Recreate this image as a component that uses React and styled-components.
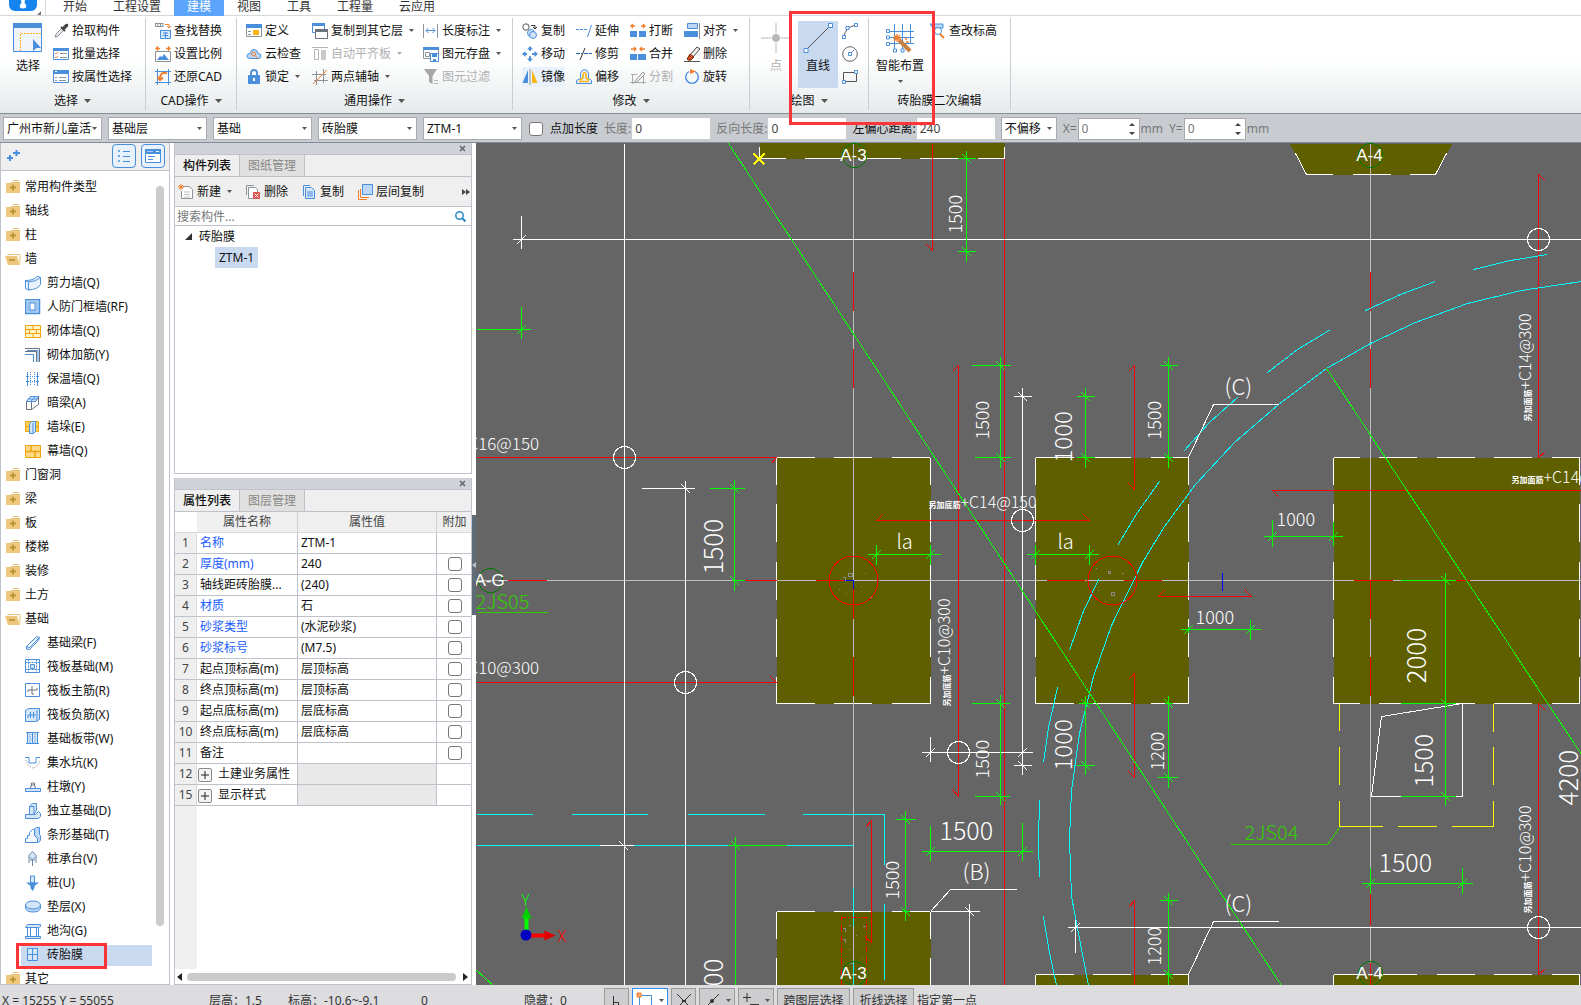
import { useState } from "react";
import styled, { createGlobalStyle, css } from "styled-components";

const B = "#4a8fdc";
const L = "#d6e6f9";
const O = "#f07f2e";
const Y = "#fdb515";
const G = "#8b9299";

const GlobalStyle = createGlobalStyle`
  * {
    box-sizing: border-box;
  }

  body {
    margin: 0;
    background: #fff;
    color: #111;
    font-family: "Noto Sans", "Noto Sans CJK SC", sans-serif;
    font-size: 12px;
    line-height: 16px;
  }

  button,
  input,
  select {
    font: inherit;
    color: inherit;
    padding: 0;
    border: 0;
    background: none;
  }
`;

/* ---------- icons ---------- */

const icons = {
  picker: <><path d="M2 14l1-3 6-6 2 2-6 6z" fill="#e6eaee" stroke={G} /><path d="M8 4l4 4M10 5l3-3q2-1 1 1l-3 3z" stroke="#444" strokeWidth="2" /></>,
  batch: <><path d="M.5 2.500h15v11H.5z" fill="#fff" stroke={B} /><path d="M0 2h16v3H0z" fill={B} stroke="none" /><path d="M2 7l1 1 2-2M2 11l1 1 2-2" stroke={O} /><path d="M7 7.500h7M7 11.500h7" stroke={G} /></>,
  byProp: <><path d="M.5 1.500h15v12H.5z" fill="#fff" stroke={B} /><path d="M0 1h16v4H0z" fill={B} stroke="none" /><path d="M2 2.500h2" stroke="#fff" /><path d="M2 8.500h2M2 11.500h2M6 8.500h7M6 11.500h7" stroke={G} /></>,
  find: <><path d="M0 .5h8M0 3.500h8M.5 0v4M3 0v4M5.500 0v4M8 0v4" stroke={G} /><path d="M10 1.500h4v3M12 3l2 2 2-2" stroke={O} /><path d="M5.500 7.500h10v8h-10z" fill={L} stroke={B} /><path d="M5 7.500h11M8 10h5M8 12.500h5M10.500 9v6" stroke={B} /></>,
  scale: <><path d="M1 2.500h4M3 .5l-2 2 2 2M15 2.500h-4M13 .5l2 2-2 2" stroke={O} strokeWidth="1.300" /><path d="M.5 5.500h15v10H.5z" fill="#fff" stroke={G} /><path d="M2 14l3-4 2 1 2-3 5 6z" fill={B} stroke="none" /></>,
  restore: <><path d="M2.500 0v16M13.500 0v16M0 2.500h16M0 13.500h16" stroke={B} /><path d="M12 4H8q-3 1-3 6M2.500 8L5 11l3-2.500" stroke={O} strokeWidth="2" /></>,
  define: <><path d="M.5 1.500h15v12H.5z" fill="#fff" stroke={G} /><path d="M0 1h16v4H0z" fill={B} stroke="none" /><path d="M2 8.500h3M2 11.500h3" stroke={G} /><path d="M7 7h6v5H7z" fill={Y} stroke="none" /></>,
  cloud: <><path d="M4 12.500q-3.500 0-3-3 .5-2 3-2 .5-4 4-4t4 4q3 0 3 2.500t-3 2.500z" fill="#bcd8f6" stroke={B} /><circle cx="7.500" cy="8" r="2" stroke={O} /><path d="M9 9.500l3 3" stroke={O} /></>,
  lock: <><path d="M5 7V4q0-3 3-3t3 3v3" stroke={B} strokeWidth="1.800" /><path d="M2.500 6.500h11v8h-11z" fill={B} stroke={B} /><path d="M8 9v3" stroke="#fff" strokeWidth="2" /></>,
  floors: <><path d="M.5.5h12v9H.5z" fill="#fff" stroke={B} /><path d="M0 0h13v3H0z" fill={B} stroke="none" /><path d="M3.500 6.500h12v9h-12z" fill="#fff" stroke="#6b747d" /><path d="M3 6h13v3H3z" fill="#6b747d" stroke="none" /></>,
  flush: <><path d="M0 1.500h16" stroke="#b5b5b5" /><path d="M2.500 3.500h4v10h-4z" stroke="#b5b5b5" /><path d="M9 4h5v10H9z" fill="#c9c9c9" stroke="none" /></>,
  axis2: <><path d="M4.500 2v14M11.500 0v14M0 5.500h14M2 11.500h14" stroke={G} /><path d="M1 15L15 1" stroke={O} /></>,
  measure: <><path d="M.5 1v14M14.500 1v14" stroke={G} /><path d="M3 7.500h9M5.500 5L3 7.500 5.500 10M9.500 5L12 7.500 9.500 10" stroke={B} /></>,
  saveEl: <><path d="M.5 1.500h15v11H.5z" fill="#fff" stroke={G} /><path d="M0 1h16v3H0z" fill={B} stroke="none" /><path d="M2.500 6.500h4v4h-4z" stroke={G} /><path d="M7.500 7.500h8v8h-8z" fill="#fff" stroke={B} /><path d="M9 8h5v3H9zM10 13h3v2h-3z" fill={B} stroke="none" /></>,
  filter: <><path d="M1 0h13L9.500 7v8L6 13V7z" fill="#a6a6a6" stroke="none" /><path d="M11 11.500h4M11 14.500h4" stroke="#b9b9b9" /></>,
  copy: <><circle cx="4" cy="4" r="3.200" stroke="#555" /><circle cx="9" cy="10" r="3.500" fill="#cfe2f8" stroke={B} /><circle cx="11" cy="12" r="3.500" fill="#cfe2f8" stroke={B} /><path d="M9 2.500h4v3M11 4l2 2 2-2" stroke="#333" /></>,
  move: <><path d="M8 2v4M8 10v4M2 8h4M10 8h4" stroke={B} strokeWidth="1.800" strokeDasharray="3 1" /><path d="M8 0l3 3.500H5zM8 16l3-3.500H5zM0 8l3.500-3v6zM16 8l-3.500-3v6z" fill={B} stroke="none" /></>,
  mirror: <><path d="M6 1v13H.5z" fill={B} stroke="none" /><path d="M10 1v13h5.500z" fill={Y} stroke="none" /><path d="M8 0v16" stroke={G} /></>,
  extend: <><path d="M0 6.500h11" stroke={B} strokeDasharray="3 1" /><path d="M15.500 2l-4 12" stroke={B} /></>,
  trim: <><path d="M0 7.500h6M8 7.500h8" stroke="#235fa8" strokeDasharray="4 1" /><path d="M9 2L4 14" stroke="#333" /></>,
  offset: <><path d="M.5 14.500v-3l4-2v-5q1-4 4-4t4 4v5l3 2v3z" fill="#e7f1fd" stroke={B} /><path d="M3 12.500h10M4 11l3-2V5q1.500-3 3 0v4l3 2" stroke={Y} strokeWidth="1.600" /></>,
  breakUp: <><path d="M0 8h7v6H0zM9 8h7v6H9z" fill={B} stroke="none" /><path d="M1 3h4M3 1L1 3l2 2M15 3h-4M13 1l2 2-2 2" stroke={O} strokeWidth="1.300" /></>,
  merge: <><path d="M0 8h7v6H0zM8 8h8v6H8z" fill={B} stroke="none" /><path d="M1 3h5M4 1l2 2-2 2M15 3h-5M12 1l-2 2 2 2" stroke={O} strokeWidth="1.300" /></>,
  split: <><path d="M2.500 5v10M13.500 7v8M0 13.500h16M1 5.500h6" stroke="#aaa" /><path d="M5 12l8-9 2 2-8 8-3 1z" fill="#eee" stroke="#999" /></>,
  align: <><path d="M3.500.5h10v5h-10z" fill="#bcd8f6" stroke={B} /><path d="M0 8h14v6H0z" fill={B} stroke="none" /><path d="M15.500 0v16" stroke={G} /></>,
  erase: <><path d="M0 15.500h16" stroke="#555" /><path d="M6 9l7-8 3 2-7 8z" fill="#eee" stroke="#444" /><path d="M6 8l4 3-3 3q-3 1-4-1z" fill="#c8501e" stroke="#7a2b0c" /></>,
  rotate: <><path d="M11 2.500A6.300 6.300 0 1 1 5 2.500" stroke={B} strokeWidth="1.400" /><path d="M6 0l6 2.500L6 5z" fill={O} stroke="none" /></>,
  arc: <><path d="M2 14q1-10 12-12" stroke="#555" /><path d="M.5 12.500h3v3h-3zM12.500.5h3v3h-3zM4 3.500h3v3H4z" fill="#fff" stroke={B} /></>,
  circle: <><circle cx="8" cy="8" r="7.300" stroke="#666" /><path d="M8 8l4-4" stroke={B} /><path d="M6.500 6.500h3v3h-3z" fill="#fff" stroke={B} /></>,
  rect: <><path d="M1.500 3.500h13v9h-13z" stroke="#555" /><path d="M.5 11.500h3v3h-3zM12.500 1.500h3v3h-3z" fill="#fff" stroke={B} /></>,
  checkElev: <><path d="M0 1h13v4H3z" fill="#bcd8f6" stroke={B} /><circle cx="8" cy="8" r="3.500" fill="#fff" stroke={B} /><path d="M10 11l4 4" stroke={O} strokeWidth="2" /></>,
  newDoc: <><path d="M5 2.500h6l3.500 3v9H3.500V7" fill="#fff" stroke={G} /><path d="M6 8h6M6 10.500h6M6 13h6" stroke="#bbb" /><path d="M0 3h6M3 0v6M1 1l4 4M5 1L1 5" stroke={O} /></>,
  del: <><path d="M1.500 11V1.500H9" stroke={G} /><path d="M3.500 3.500h7l2 2v9h-9z" fill="#fff" stroke={G} /><path d="M8 8h7v7H8z" fill="#d9534f" stroke="none" /><path d="M9.500 9.500l4 4M13.500 9.500l-4 4" stroke="#fff" /></>,
  copyDoc: <><path d="M2.500 12V1.500H9" stroke={B} /><path d="M4.500 3.500h6l3 3v8h-9z" fill={L} stroke={B} /><path d="M6 8h6M6 10h6M6 12h6" stroke={B} /></>,
  layerCopy: <><path d="M1.500 6v9.500H10M3.500 5v8.500H12" stroke={O} /><path d="M5.500.5h10v10h-10z" fill="#bcd8f6" stroke={B} /></>,
  folder: <><path d="M1 4h4l1-1h9v11H1z" fill="#ecc77c" stroke="none" /><path d="M8 1.500h6" stroke="#ecc77c" /><path d="M5 8.500h6M8 5.500v6" stroke="#b98a2e" strokeWidth="1.500" /></>,
  folderOpen: <><path d="M3 13V3.500h12v9" fill="#fff" stroke="#ecc77c" /><path d="M0 5h12l3 9H3z" fill="#ecc77c" stroke="none" /><path d="M4 9h6" stroke="#b98a2e" strokeWidth="1.500" /></>,
  shear: <><path d="M.5 5.500q9 0 12-4.500l3 1.500v7q-3 5-12 5.500l-3-1.500z" fill="#eaf3fd" stroke={B} /><path d="M.5 5.500l3 1.500q8-.5 12-4.500M3.500 7v8" stroke={B} /></>,
  frame: <><path d="M.5.5h14v14H.5z" fill="#bcd8f6" stroke={B} strokeWidth="1.500" /><path d="M3 3h9v9H3z" stroke="#7fb2ea" /><path d="M5 4h5v7H5z" fill="#fff" stroke={B} /></>,
  brick: <><path d="M.5 2.500h15v12H.5z" fill="#fff1c8" stroke="#efa50a" /><path d="M0 6.500h16M0 10.500h16M8 2v4M4.500 6v4M11.500 6v4M8 10v4" stroke="#efa50a" /></>,
  rebar: <><path d="M0 1.500h14.500V15M0 4.500h11.500V15" stroke="#6b747d" /><path d="M2 3.500h11V15M0 7.500h8.500V15" stroke={B} /></>,
  warm: <><path d="M2.500 1v14M12.500 1v14" stroke={B} /><path d="M5.500 1v14M9.500 1v14M1 5.500h13M1 10.500h13" stroke={B} strokeDasharray="1 1" /></>,
  hidden: <><path d="M1.500 6.500l4-5h8l-3 5zM1.500 6.500h5v8h-5zM6.500 14.500l7-5v-8" fill="#fff" stroke="#6b747d" /><path d="M1.500 6.500l4-5h8l-3 5z" fill={L} stroke={B} /><path d="M4 4h8M6 6l4-4" stroke={B} /></>,
  pier: <><path d="M.5 2.500h13v10H.5z" fill="#fdd25a" stroke="#efa50a" /><path d="M0 7.500h14" stroke="#efa50a" /><path d="M4.500 4.500l2-2h4v10l-2 2h-4z" fill={L} stroke={B} /><path d="M8 4v10" stroke={B} /></>,
  curtain: <><path d="M.5 2.500h15v12H.5z" fill="#fdd98a" stroke="#efa50a" /><path d="M0 8.500h16M6 2v6M10 8v6" stroke="#efa50a" strokeWidth="1.500" /></>,
  beam: <path d="M1.500 11.500l10-10 3 1-1 3-9 9-3-.5zM1.500 11.500l3 1 10-10" fill={L} stroke={B} />,
  raft: <><path d="M.5.5h14v13H.5z" stroke={B} /><path d="M3.500.5v13M11.500.5v13M.5 3.500h14M.5 10.500h14" stroke={B} strokeDasharray="2 1" /><path d="M5.500 5.500h4v4h-4z" fill={L} stroke={B} /></>,
  raftMain: <><path d="M.5.5h14v13H.5z" fill="#fff" stroke={B} /><path d="M3 9V7h9V5M7 3v8h2" stroke="#6b747d" /></>,
  raftNeg: <><path d="M.5 3.500l3-2h11v11l-3 2H.5z" fill={L} stroke={B} /><path d="M12 3v11M3 11V8h8M5.500 5v6M8.500 5v6" stroke={B} /></>,
  strip: <><path d="M1 1.500h13M1 12.500h13" stroke={B} /><path d="M3 2h9v10H3z" fill={L} stroke="none" /><path d="M2.500 2v10M7.500 2v10M12.500 2v10" stroke={B} /><path d="M5 3v9M10 3v9" stroke={B} strokeDasharray="1 1" /></>,
  sump: <><path d="M0 2.500h4V8h7V2.500h4" stroke={B} /><path d="M1 5q2 7 7 8 5-1 7-8" stroke={G} strokeDasharray="1 1" /></>,
  pedestal: <><path d="M.5 9.500h15v3H.5z" fill={L} stroke={B} /><path d="M5.500 9l1-3h3l1 3M6.500 6V4h3v2" stroke="#6b747d" /></>,
  isolated: <><path d="M.5 11.500h10l3-3 2 2v3l-2 2H.5zM4.500 11V3l3-2.500h4v7L9 11M4.500 3.500H9V11" fill={L} stroke={B} /></>,
  stripFd: <><path d="M9 2.500l2.500-2h3v7l1 1v5l-2 2h-3z" fill="#bcd8f6" stroke={B} /><path d="M.5 15.500v-4h2V8.500h2v-3l3-3h2v6l3 3v4z" fill="#f3f8fe" stroke={B} /></>,
  cap: <><path d="M7.500.5l4 4.500-4 4-4-4z" fill={L} stroke="#6b88a8" /><path d="M7.500 9v6M4 6v6M11 6v6M5 9h5" stroke="#6b88a8" /></>,
  pile: <><path d="M5.500 1h4v7h-4z" fill={L} stroke={B} /><path d="M1 7.500h13L9.500 11v2l-2 3-2-3v-2z" fill={B} stroke="none" /></>,
  cushion: <><path d="M.5 6v3q1 4 7.500 4t7.500-4V6" fill="#bcd8f6" stroke={B} /><ellipse cx="8" cy="6" rx="7.500" ry="4" fill={L} stroke={B} /></>,
  trench: <><path d="M.5 4.500l2-3h13v2l-2 1zM2.500 5v8M5.500 5v8M11.500 5v8M13.500 5v8M.5 13.500h15v2H.5z" fill={L} stroke={B} /></>,
  mould: <><path d="M2.500 1.500h10v12h-10z" fill={L} stroke={B} /><path d="M7.500 2v11M3 7.500h9" stroke={B} /></>,
};

const IconSvg = styled.svg`
  flex: none;
  width: 16px;
  height: 16px;
`;

const Icon = ({ name }) => (
  <IconSvg viewBox="0 0 16 16" fill="none" aria-hidden="true">{icons[name]}</IconSvg>
);

const ArrowSvg = styled.svg`
  flex: none;
  width: ${(p) => (p.$small ? 5 : 7)}px;
  height: ${(p) => (p.$small ? 3 : 4)}px;
  pointer-events: none;
  color: ${(p) => (p.$muted ? "#b0b0b0" : "#555")};
`;

const Arrow = ({ muted, small }) => (
  <ArrowSvg $muted={muted} $small={small} viewBox="0 0 7 4" aria-hidden="true"><path d="M0 0h7L3.500 4z" fill="currentColor" /></ArrowSvg>
);

/* ---------- shell ---------- */

const Page = styled.div`
  position: relative;
  display: flex;
  flex-direction: column;
  height: 100vh;
  overflow: hidden;
`;

const TabBar = styled.nav`
  flex: none;
  display: flex;
  height: 16px;
  border-bottom: 1px solid #d5d9da;
`;

const Logo = styled.svg`
  width: 46px;
  height: 16px;
`;

const MenuTab = styled.button`
  height: 16px;
  padding: 0 13px 2px;
  line-height: 14px;
  color: ${(p) => (p.$active ? "#fff" : "#333")};
  background: ${(p) => (p.$active ? "#5aa5fb" : "none")};

  &:first-of-type {
    margin-left: 4px;
  }
`;

const Ribbon = styled.div`
  flex: none;
  display: flex;
  height: 98px;
  padding: 2px 0 3px;
  background: linear-gradient(#fff 45%, #e5eaeb);
  border-bottom: 1px solid #858f96;
`;

const Group = styled.section`
  display: flex;
  flex-direction: column;
  width: ${(p) => p.$width}px;
  border-right: 1px solid #c9cdcf;
`;

const GroupBody = styled.div`
  display: flex;
  height: 70px;
  padding-top: 1px;
  padding-left: ${(p) => p.$pad}px;
`;

const GroupLabel = styled.div`
  display: flex;
  align-items: center;
  justify-content: center;
  gap: 6px;
  height: 22px;
  padding-top: 3px;
`;

const Column = styled.div`
  flex: none;
  display: grid;
  grid-template-rows: repeat(3, 23px);
  justify-items: start;
  align-items: center;
  min-width: ${(p) => p.$width || 0}px;
  padding-left: ${(p) => p.$pad || 0}px;
`;

const ToolButton = styled.button`
  display: flex;
  align-items: center;
  gap: 3px;
  height: 20px;
  white-space: nowrap;
  color: ${(p) => (p.$off ? "#b0b0b0" : "#111")};
  ${(p) =>
    p.$hover &&
    css`
      background: #e9f2fc;
    `}

  ${ArrowSvg} {
    margin-left: 3px;
  }
`;

const BigButton = styled.button`
  flex: none;
  display: flex;
  flex-direction: column;
  align-items: center;
  width: ${(p) => p.$width || 40}px;
  height: 67px;
  margin: 2px 2px 0 0;
  padding-top: 2px;
  color: ${(p) => (p.$off ? "#b0b0b0" : "#111")};
  background: ${(p) => (p.$active ? "#c9d9f0" : "none")};

  svg:first-child {
    width: 30px;
    height: 30px;
    margin-bottom: 5px;
  }

  ${ArrowSvg} {
    margin-top: 6px;
  }
`;

const HighlightFrame = styled.div`
  position: absolute;
  left: 789px;
  top: 11px;
  width: 146px;
  height: 114px;
  border: 3px solid #fd3538;
  pointer-events: none;
`;

const OptionsBar = styled.div`
  flex: none;
  display: flex;
  align-items: center;
  gap: 6px;
  height: 29px;
  padding: 1px 3px 0;
  background: #c8ccd1;
  border-bottom: 1px solid #858b98;
  color: #777;
`;

const SelectBox = styled.div`
  flex: none;
  display: flex;
  align-items: center;
  width: ${(p) => p.$width || 99}px;
  height: 23px;
  padding: 0 4px 0 3px;
  background: #fff;
  border: 1px solid #a9adb3;
  color: #111;

  select {
    appearance: none;
    flex: 1;
    min-width: 0;
    outline: none;
  }
`;

const Field = styled.label`
  flex: none;
  display: flex;
  align-items: center;
  gap: 1px;
  color: ${(p) => (p.$strong ? "#111" : "#777")};

  > input {
    width: 78px;
    height: 21px;
    padding-left: 3px;
    background: #fff;
    color: #444;
  }
`;

const CheckField = styled(Field)`
  gap: 7px;
  padding-left: 1px;
`;

const Tick = styled.input.attrs({ type: "checkbox" })`
  && {
    appearance: none;
    display: block;
    flex: none;
    width: 14px;
    height: 14px;
    margin: 0 auto;
    padding: 0;
    background: #fff;
    border: 1px solid #777;
    border-radius: 3px;
  }
`;

const Spin = styled.span`
  display: flex;
  align-items: center;
  width: 62px;
  height: 22px;
  padding: 0 4px 0 3px;
  background: #fff;
  border: 1px solid #aaa;

  input {
    flex: 1;
    min-width: 0;
  }

  svg {
    width: 6px;
    height: 12px;
  }
`;

const Main = styled.main`
  flex: 1;
  display: flex;
  min-height: 0;
`;

/* ---------- component tree on the left ---------- */

const SidePanel = styled.aside`
  flex: none;
  display: flex;
  flex-direction: column;
  width: 170px;
  border: 1px solid #bfc2ca;
  border-top: 0;
`;

const SideHead = styled.div`
  flex: none;
  display: flex;
  align-items: center;
  gap: 5px;
  height: 28px;
  padding: 0 4px 2px 6px;
  background: #efefef;
  border-bottom: 1px solid #bfc2ca;

  > svg {
    width: 13px;
    height: 13px;
    margin-right: auto;
  }
`;

const ViewToggle = styled.button`
  display: grid;
  place-items: center;
  width: 24px;
  height: 24px;
  background: #e8f2fd;
  border: 1px solid ${B};
  border-radius: 4px;
`;

const SideBody = styled.div`
  flex: 1;
  display: flex;
  min-height: 0;
  overflow: hidden;
`;

const Tree = styled.ul`
  flex: 1;
  margin: 0;
  padding: 4px 0 0;
  list-style: none;
`;

const TreeRow = styled.li`
  position: relative;
  display: flex;
  align-items: center;
  height: 24px;
  padding-left: ${(p) => (p.$child ? 20 : 4)}px;
`;

const TreeButton = styled.button`
  display: flex;
  align-items: center;
  gap: ${(p) => (p.$child ? 6 : 4)}px;
  width: 131px;
  height: 21px;
  padding-left: ${(p) => (p.$child ? 4 : 0)}px;
  white-space: nowrap;
  background: ${(p) => (p.$active ? "#c9d9f0" : "none")};
`;

const RowFrame = styled.span`
  position: absolute;
  left: 15px;
  top: 0;
  width: 91px;
  height: 26px;
  border: 3px solid #fd3538;
  pointer-events: none;
`;

const ScrollThumb = styled.div`
  flex: none;
  width: 8px;
  height: 740px;
  margin: 15px 5px 0 0;
  border-radius: 4px;
  background: #cacaca;
`;

/* ---------- middle docks ---------- */

const Docks = styled.div`
  flex: none;
  display: flex;
  flex-direction: column;
  gap: 4px;
  width: 298px;
  margin-left: 4px;
`;

const Dock = styled.section`
  flex: ${(p) => (p.$height ? `0 0 ${p.$height}px` : 1)};
  display: flex;
  flex-direction: column;
  min-height: 0;
  border: 1px solid #bfc2ca;
  border-top: 0;
`;

const DockTitle = styled.div`
  flex: none;
  display: flex;
  justify-content: flex-end;
  height: 12px;
  padding-right: 5px;
  background: #d0d3d9;
  border-bottom: 1px solid #bfc2ca;

  button {
    display: grid;
    place-items: center;
    width: 7px;
  }
`;

const DockTabs = styled.div`
  flex: none;
  display: flex;
  height: 22px;
  background: #efefef;
  border-bottom: 1px solid #bfc2ca;
`;

const DockTab = styled.button`
  width: 65px;
  border-right: 1px solid #bfc2ca;
  font-weight: ${(p) => (p.$active ? 500 : 400)};
  color: ${(p) => (p.$active ? "#111" : "#888")};
  background: ${(p) => (p.$active ? "#efefef" : "#e0e0e0")};
`;

const DockTools = styled.div`
  flex: none;
  display: flex;
  align-items: center;
  gap: 13px;
  height: 30px;
  padding: 0 1px 0 3px;
  background: #efefef;
  border-bottom: 1px solid #bfc2ca;
`;

const MoreButton = styled.button`
  display: grid;
  margin-left: auto;
`;

const SearchRow = styled.label`
  flex: none;
  display: flex;
  align-items: center;
  height: 19px;
  padding: 1px 5px 0 2px;
  border-bottom: 1px solid #bfc2ca;

  input {
    flex: 1;
    min-width: 0;
    outline: none;
  }

  input::placeholder {
    color: #777;
    opacity: 1;
  }
`;

const PartTree = styled.div`
  display: flex;
  flex-direction: column;
  align-items: flex-start;
  padding-left: 10px;
`;

const PartRow = styled.button`
  display: flex;
  align-items: center;
  gap: 7px;
  height: 21px;
  margin-left: ${(p) => (p.$leaf ? 30 : 0)}px;
  padding: 0 ${(p) => (p.$leaf ? 4 : 0)}px;
  background: ${(p) => (p.$leaf ? "#c9d9f0" : "none")};
`;

const GridArea = styled.div`
  flex: 1;
  min-height: 0;
  background: linear-gradient(90deg, #efefef 22px, #fff 22px);
`;

const PropTable = styled.table`
  width: 100%;
  table-layout: fixed;
  border-spacing: 0;

  th {
    height: 21px;
    padding: 0;
    font-weight: 400;
    color: #444;
    background: #efefef;
    border-right: 1px solid #cfd1d6;
    border-bottom: 1px solid #d8d8d8;
  }

  th:first-child {
    background: #fff;
    border-right: 0;
  }

  td {
    height: 21px;
    padding: 0 0 0 3px;
    white-space: nowrap;
    background: #fff;
    border-right: 1px solid #bfc2ca;
    border-bottom: 1px solid #bfc2ca;
  }

  td:first-child {
    padding: 0;
    text-align: center;
    color: #444;
    background: #efefef;
    border-right-color: #dcdcdc;
  }

  th:last-child,
  td:last-child {
    padding: 0 0 0 1px;
    border-right: 0;
  }
`;

const NameCell = styled.td`
  color: ${(p) => (p.$link ? "#1a5cff" : "#111")};
`;

const ValueCell = styled.td`
  && {
    background: ${(p) => (p.$empty ? "#e9e9e9" : "#fff")};
  }
`;

const Expander = styled.button`
  display: inline-grid;
  place-items: center;
  width: 14px;
  height: 14px;
  margin: 0 6px 0 -2px;
  vertical-align: middle;
  background: #f4f4f4;
  border: 1px solid #888;
  border-radius: 2px;
`;

const HScroll = styled.div`
  flex: none;
  display: flex;
  align-items: center;
  gap: 5px;
  height: 15px;
  padding: 0 3px 0 2px;

  svg {
    width: 5px;
    height: 8px;
  }

  div {
    flex: 1;
    height: 8px;
    margin-right: 2px;
    border-radius: 4px;
    background: #cacaca;
  }
`;

const Splitter = styled.div`
  flex: none;
  display: grid;
  place-items: center;
  width: 4px;
  height: 100px;
  margin-top: 372px;
  background: #5f6b77;
`;

/* ---------- drawing ---------- */

const Drawing = styled.svg`
  flex: 1;
  min-width: 0;
  height: 100%;
  background: #656565;
  fill: none;
  shape-rendering: crispEdges;

  text {
    font-family: "Noto Sans CJK SC", sans-serif;
    font-weight: 300;
    fill: #fff;
    stroke: none;
  }
`;

const edge = { stroke: "#fff", strokeDasharray: "38 19.500" };

const Block = ({ x, y, w, h, offset = 0 }) => (
  <g>
    <rect x={x} y={y} width={w} height={h} fill="#5f5f00" />
    <path d={`M${x} ${y}h${w}M${x} ${y + h}h${w}`} {...edge} strokeDashoffset={offset} />
    <path d={`M${x} ${y}v${h}M${x + w} ${y}v${h}`} {...edge} strokeDashoffset={11} />
  </g>
);

const Label = ({ x, y, size = 18, up, color, prefix, children }) => (
  <text x={x} y={y} fontSize={size} transform={up ? `rotate(-90 ${x} ${y})` : undefined} style={color ? { fill: color } : undefined}>
    {prefix && <tspan fontSize="8" fontWeight="700">{prefix}</tspan>}
    {children}
  </text>
);

const AxisMark = ({ x, y, children }) => (
  <g>
    <circle cx={x} cy={y} r="12" stroke="#007a00" />
    <text x={x - 1} y={y + 5} fontSize="17" textAnchor="middle" style={{ fontFamily: "Liberation Sans", fontWeight: 400 }}>{children}</text>
  </g>
);

// tick marks: v = on a vertical dimension line, h = on a horizontal one
const v = (x, y, a = 9, b = a) => `M${x - a} ${y}H${x + b}M${x - 4} ${y - 4}l9 9`;
const h = (x, y, a = 10, b = a) => `M${x} ${y - a}V${y + b}M${x - 5} ${y + 5}l9 -9`;

const greenPath = [
  "M728 143L1281 985M1326 368L1581 754M476 970L493 985",
  "M476 329H530", h(521, 329, 23, 9),
  "M966 150V261", v(966, 158), v(966, 251),
  "M1000 356V467", v(1000, 365, 29, 10), v(1000, 457, 26, 10),
  "M734 479V590", v(734, 488, 25, 10), v(734, 580, 3, 10),
  "M867 554H940", h(876, 554), h(930, 554),
  "M1026 554H1098", h(1035, 554), h(1089, 554),
  "M1085 387V467", v(1085, 396), v(1085, 457),
  "M1168 356V467", v(1168, 365), v(1168, 457, 4),
  "M1263 536H1342", h(1272, 536, 17, 10), h(1333, 536, 15, 9),
  "M1180 629H1260", h(1188, 629, 3), h(1250, 629),
  "M1445 572V805", v(1445, 580, 45, 10), v(1445, 703, 45, 10), v(1445, 796, 45, 10),
  "M1361 883H1472", h(1370, 883, 16, 10), h(1462, 883, 16, 10),
  "M1168 695V787", v(1168, 703, 4), v(1168, 777, 11, 9),
  "M1085 695V774", v(1085, 703, 7), v(1085, 765),
  "M1168 892V984", v(1168, 900), v(1168, 974, 4),
  "M1000 694V804", v(1000, 703, 29, 9), v(1000, 796, 26, 9),
  "M727 845H786M735 836V985", v(735, 845, 8, 10),
  "M905 810V920", v(905, 819, 10), v(905, 911, 4),
  "M921 851H1032", h(930, 851, 26, 9), h(1022, 851, 29, 9),
].join("");

const redPath = [
  "M932 143V250l-6 -6M1004 158V985",
  "M952 371L958 365V796l-6 -7",
  "M476 457H776l-5 6M476 682H776l-6 -6",
  "M882 514L876 520H1089l-6 -6",
  "M1545 181L1538 174V457l7 -6M1545 710L1538 703V974l7 -6",
  "M1128 371L1134 365V489l-6 -6M1128 679L1134 673V777l-6 -6M1128 907L1134 900V985",
  "M1279 497L1272 490H1581",
  "M1164 590L1158 596H1251l-7 -7",
  "M865 827L871 820V942l-6 -5",
].join("");

const whitePath = [
  "M624 143V985M512 239H1581", h(521, 239, 24, 9),
  "M685 480V985", v(685, 488, 44, 9),
  "M1022 387V774", v(1022, 396), v(1022, 765), h(1022, 752, 9),
  "M921 752H1032", h(930, 752, 16, 9),
  "M599 845H633M619 841l9 9",
  "M930 911H979M969 903V985M965 907l9 9",
  "M930 911L950 889H1016",
  "M1188 457L1213 404H1278M1188 974L1213 921H1278",
  "M1067 927H1581", h(1075, 927, 8, 25),
  "M1370 796H1462V703L1381 716L1371 796",
].join("");

const cyanPath = [
  "M1581 281L1521 290L1467 303L1415 322L1370 343L1326 368L1278 404L1234 442L1195 484L1164 526L1142 562L1111 625L1093 676L1079 733L1071 790L1069 839L1071 896L1078 933L1088 985",
  "M1473 269L1510 260L1547 254M1365 310L1400 294L1435 281M1267 372L1297 349L1330 329M1183 451L1209 422L1238 396",
  "M1159 481L1137 512L1117 545M1098 579L1082 613L1069 650M1057 687L1048 727L1043 762M1039 800L1038 840L1039 877M1043 916L1049 952L1056 985",
  "M476 814H532M571 814H647M687 814H764M802 814H884V864M884 903V979",
  "M476 845H853M853 887V925M853 962V984",
].join("");

const Plan = () => (
  <Drawing viewBox="476 143 1105 842" preserveAspectRatio="xMinYMin slice" role="img" aria-label="基础平面图">
    <g transform="translate(.5 .5)">
      <Block x={759} y={100} w={245} h={58} offset={12} />
      <path d="M1289 143H1452L1435 174H1306z" fill="#5f5f00" />
      <path d="M1295 153L1306 174H1332M1352 174H1390M1409 174H1435L1446 153" stroke="#fff" />
      <Block x={776} y={457} w={154} h={246} />
      <Block x={1035} y={457} w={153} h={246} />
      <Block x={1333} y={457} w={246} h={246} offset={12} />
      <Block x={776} y={911} w={154} h={246} />
      <Block x={1035} y={974} w={153} h={246} />
      <Block x={1333} y={974} w={246} h={246} offset={12} />
      <path d="M476 580H1581M853 143V985M1370 143V985" stroke="#bdbdbd" />
      <path d={redPath} stroke="#f00" />
      <path d="M507 580H546M744 580H776M815 580H843M1046 580H1084M1123 580H1161M1353 580H1392M1455 580H1469" stroke="#f00" />
      <path d="M853 271V310M853 348V387M853 588V618M853 656V695M1370 271V310M1370 348V387M1370 580V618M1370 656V695M1370 892V925M1370 962V985" stroke="#f00" />
      <path d={cyanPath} stroke="#0ff" />
      <path d={whitePath} stroke="#fff" />
      <path d={greenPath} stroke="#0f0" />
      <path d="M1339 703V730M1339 746V784M1339 800V826H1382M1397 826H1436M1451 826H1493V800M1493 784V746M1493 731V703" stroke="#ff0" />
      <path d="M753 153l11 11M764 153l-11 11" stroke="#ff0" strokeWidth="1.500" />
      <path d="M476 612H547M1230 844H1327L1339 827" stroke="#3c0" />
      <path d="M843 580H853V588M1222 572V590" stroke="#00f" />
      <circle cx="853" cy="580" r="24.500" stroke="#f00" />
      <circle cx="1112" cy="580" r="24.500" stroke="#f00" />
      <path d="M841 985V917H866V985" stroke="#f00" strokeDasharray="6 2 1 2" />
      <path
        d="M848 573h4v3h-4zM842 577h3v3M864 573h1M838 589h1M860 586h1M869 597h2M845 593h1M1108 571h2v2h-2zM1111 592h3v3h-3zM1095 568h1M1121 573h2M1097 590h1M1104 601h1M1123 600h2M842 928h3v3M842 939h3v3M848 925h2M862 926h3M848 949h1M855 935h1M849 963h3M861 958h1"
        stroke="#8a8a8a"
      />
      {[[624, 457], [685, 682], [1022, 520], [958, 752], [1538, 239], [1538, 927]].map(([x, y]) => (
        <circle key={`${x}-${y}`} cx={x} cy={y} r="11" stroke="#fff" />
      ))}

      <AxisMark x={854} y={155}>A-3</AxisMark>
      <AxisMark x={1370} y={155}>A-4</AxisMark>
      <AxisMark x={490} y={580}>A-G</AxisMark>
      <AxisMark x={854} y={973}>A-3</AxisMark>
      <AxisMark x={1370} y={973}>A-4</AxisMark>

      <Label x={961} y={233} up>1500</Label>
      <Label x={988} y={439} up>1500</Label>
      <Label x={988} y={778} up>1500</Label>
      <Label x={1160} y={439} up>1500</Label>
      <Label x={1163} y={770} up>1200</Label>
      <Label x={1160} y={965} up>1200</Label>
      <Label x={898} y={899} up>1500</Label>
      <Label x={722} y={574} up size={26}>1500</Label>
      <Label x={722} y={986} up size={26}>00</Label>
      <Label x={1071} y={462} up size={24}>1000</Label>
      <Label x={1071} y={770} up size={24}>1000</Label>
      <Label x={1425} y={683} up size={26}>2000</Label>
      <Label x={1432} y={787} up size={25}>1500</Label>
      <Label x={1577} y={805} up size={26}>4200</Label>
      <Label x={939} y={839} size={25}>1500</Label>
      <Label x={1378} y={871} size={25}>1500</Label>
      <Label x={1276} y={525}>1000</Label>
      <Label x={1195} y={623}>1000</Label>
      <Label x={896} y={548} size={20}>la</Label>
      <Label x={1057} y={548} size={20}>la</Label>
      <Label x={962} y={879} size={22}>(B)</Label>
      <Label x={1224} y={394} size={22}>(C)</Label>
      <Label x={1224} y={911} size={22}>(C)</Label>
      <Label x={467} y={449} size={17}>C16@150</Label>
      <Label x={467} y={673} size={17}>C10@300</Label>
      <Label x={928} y={507} size={16} prefix="另加底筋">+C14@150</Label>
      <Label x={1511} y={482} size={16} prefix="另加面筋">+C14@150</Label>
      <Label x={949} y={706} up size={16} prefix="另加底筋">+C10@300</Label>
      <Label x={1530} y={421} up size={16} prefix="另加面筋">+C14@300</Label>
      <Label x={1530} y={913} up size={16} prefix="另加面筋">+C10@300</Label>
      <Label x={475} y={608} size={20} color="#3c0">2JS05</Label>
      <Label x={1244} y={839} size={20} color="#3c0">2JS04</Label>

      <g shapeRendering="auto">
        <path d="M526 935V915" stroke="#0f0" strokeWidth="4" />
        <path d="M526 906l5 12h-10z" fill="#00d000" />
        <path d="M526 935H546" stroke="#f00" strokeWidth="4" />
        <path d="M555 935l-11 -5v10z" fill="#e00000" />
        <circle cx="525.500" cy="934.500" r="5.500" fill="#0000c0" />
      </g>
      <Label x={521} y={905} size={16} color="#0f0">Y</Label>
      <Label x={557} y={941} size={16} color="#f00">X</Label>
    </g>
  </Drawing>
);

/* ---------- status bar ---------- */

const StatusBar = styled.footer`
  flex: none;
  display: flex;
  align-items: flex-start;
  gap: 3px;
  height: 20px;
  padding: 3px 2px 0;
  overflow: hidden;
  background: #dddddf;
  color: #333;
`;

const StatusText = styled.span`
  flex: none;
  width: ${(p) => (p.$width ? `${p.$width}px` : "auto")};
  line-height: 25px;
  white-space: pre;
`;

const StatusButton = styled.button`
  flex: none;
  display: flex;
  align-items: center;
  justify-content: center;
  gap: 5px;
  width: ${(p) => p.$width}px;
  height: 25px;
  background: ${(p) => (p.$active ? "#fff" : "#cdcdcf")};
  border: 1px solid ${(p) => (p.$active ? "#2f8df5" : "#9a9a9a")};

  svg:first-child {
    width: 18px;
    height: 18px;
  }
`;

/* ---------- data ---------- */

const sideItems = [
  ["folder", "常用构件类型"], ["folder", "轴线"], ["folder", "柱"], ["folderOpen", "墙"],
  ["shear", "剪力墙(Q)", 1], ["frame", "人防门框墙(RF)", 1], ["brick", "砌体墙(Q)", 1], ["rebar", "砌体加筋(Y)", 1],
  ["warm", "保温墙(Q)", 1], ["hidden", "暗梁(A)", 1], ["pier", "墙垛(E)", 1], ["curtain", "幕墙(Q)", 1],
  ["folder", "门窗洞"], ["folder", "梁"], ["folder", "板"], ["folder", "楼梯"], ["folder", "装修"], ["folder", "土方"],
  ["folderOpen", "基础"],
  ["beam", "基础梁(F)", 1], ["raft", "筏板基础(M)", 1], ["raftMain", "筏板主筋(R)", 1], ["raftNeg", "筏板负筋(X)", 1],
  ["strip", "基础板带(W)", 1], ["sump", "集水坑(K)", 1], ["pedestal", "柱墩(Y)", 1], ["isolated", "独立基础(D)", 1],
  ["stripFd", "条形基础(T)", 1], ["cap", "桩承台(V)", 1], ["pile", "桩(U)", 1], ["cushion", "垫层(X)", 1],
  ["trench", "地沟(G)", 1], ["mould", "砖胎膜", 1],
  ["folder", "其它"],
];

const properties = [
  [1, "名称", "ZTM-1", { link: true, noTick: true }],
  [2, "厚度(mm)", "240", { link: true }],
  [3, "轴线距砖胎膜...", "(240)", {}],
  [4, "材质", "石", { link: true }],
  [5, "砂浆类型", "(水泥砂浆)", { link: true }],
  [6, "砂浆标号", "(M7.5)", { link: true }],
  [7, "起点顶标高(m)", "层顶标高", {}],
  [8, "终点顶标高(m)", "层顶标高", {}],
  [9, "起点底标高(m)", "层底标高", {}],
  [10, "终点底标高(m)", "层底标高", {}],
  [11, "备注", "", {}],
  [12, "土建业务属性", "", { group: true, noTick: true }],
  [15, "显示样式", "", { group: true, noTick: true }],
];

const Tool = ({ icon, text, arrow, off, hover, label }) => (
  <ToolButton $off={off} $hover={hover} disabled={off} aria-label={label}>
    <Icon name={icon} />
    {text}
    {arrow && <Arrow muted={off} small />}
  </ToolButton>
);

const Picker = ({ label, value, width }) => (
  <SelectBox $width={width}>
    <select aria-label={label} defaultValue={value}>
      <option>{value}</option>
    </select>
    <Arrow small />
  </SelectBox>
);

const SpinField = ({ name }) => (
  <Field>
    {name}=
    <Spin>
      <input defaultValue="0" />
      <svg viewBox="0 0 6 12"><path d="M3 0l3 3H0zM3 12l3-3H0z" fill="#444" /></svg>
    </Spin>
    mm
  </Field>
);

const DockHeader = () => (
  <DockTitle>
    <button aria-label="关闭">
      <svg width="7" height="7" viewBox="0 0 7 7"><path d="M1 1l5 5M6 1L1 6" stroke="#666" strokeWidth="1.500" /></svg>
    </button>
  </DockTitle>
);

const menu = ["开始", "工程设置", "建模", "视图", "工具", "工程量", "云应用"];

export default function App() {
  const [tab, setTab] = useState("建模");
  const [selected, setSelected] = useState("砖胎膜");

  return (
    <>
      <GlobalStyle />
      <Page>
        <TabBar>
          <Logo viewBox="0 0 46 16">
            <rect x="9" y="-18" width="28" height="29" rx="6" fill="#1684ee" />
            <path d="M21 0h4l-.5 2.500q2.500 3 1.500 5-3 2-6 0-1-2 1.500-5z" fill="#fff" />
            <path d="M41 11v4h-4z" fill="#777" />
            <path d="M45.500 0v16" stroke="#d5d9da" />
          </Logo>
          {menu.map((m) => (
            <MenuTab key={m} $active={m === tab} onClick={() => setTab(m)}>{m}</MenuTab>
          ))}
        </TabBar>

        <Ribbon>
          <Group $width={146}>
            <GroupBody $pad={8}>
              <BigButton>
                <svg viewBox="0 0 30 30" fill="none">
                  <path d="M.5.5h28v28H.5z" fill="#f1f4fa" stroke={B} />
                  <path d="M0 0h29v5H0z" fill={B} />
                  <path d="M7.500 28V10.500H28" stroke={Y} strokeDasharray="2 1" />
                  <path d="M20 16l8 9h-4.500L20 28z" fill={B} />
                </svg>
                选择
              </BigButton>
              <Column $pad={3}>
                <Tool icon="picker" text="拾取构件" />
                <Tool icon="batch" text="批量选择" />
                <Tool icon="byProp" text="按属性选择" />
              </Column>
            </GroupBody>
            <GroupLabel>选择 <Arrow /></GroupLabel>
          </Group>
          <Group $width={91}>
            <GroupBody $pad={9}>
              <Column>
                <Tool icon="find" text="查找替换" />
                <Tool icon="scale" text="设置比例" />
                <Tool icon="restore" text="还原CAD" />
              </Column>
            </GroupBody>
            <GroupLabel>CAD操作 <Arrow /></GroupLabel>
          </Group>
          <Group $width={276}>
            <GroupBody $pad={9}>
              <Column $width={66}>
                <Tool icon="define" text="定义" />
                <Tool icon="cloud" text="云检查" />
                <Tool icon="lock" text="锁定" arrow />
              </Column>
              <Column $width={111}>
                <Tool icon="floors" text="复制到其它层" arrow />
                <Tool icon="flush" text="自动平齐板" arrow off />
                <Tool icon="axis2" text="两点辅轴" arrow />
              </Column>
              <Column>
                <Tool icon="measure" text="长度标注" arrow />
                <Tool icon="saveEl" text="图元存盘" arrow />
                <Tool icon="filter" text="图元过滤" off />
              </Column>
            </GroupBody>
            <GroupLabel>通用操作 <Arrow /></GroupLabel>
          </Group>
          <Group $width={237}>
            <GroupBody $pad={9}>
              <Column $width={54}>
                <Tool icon="copy" text="复制" />
                <Tool icon="move" text="移动" />
                <Tool icon="mirror" text="镜像" hover />
              </Column>
              <Column $width={54}>
                <Tool icon="extend" text="延伸" />
                <Tool icon="trim" text="修剪" />
                <Tool icon="offset" text="偏移" />
              </Column>
              <Column $width={54}>
                <Tool icon="breakUp" text="打断" />
                <Tool icon="merge" text="合并" />
                <Tool icon="split" text="分割" off />
              </Column>
              <Column>
                <Tool icon="align" text="对齐" arrow />
                <Tool icon="erase" text="删除" />
                <Tool icon="rotate" text="旋转" />
              </Column>
            </GroupBody>
            <GroupLabel>修改 <Arrow /></GroupLabel>
          </Group>
          <Group $width={119}>
            <GroupBody $pad={6}>
              <BigButton $off disabled>
                <svg viewBox="0 0 30 30">
                  <path d="M15 0v30M0 15h30" stroke="#b8b8b8" />
                  <circle cx="15" cy="15" r="4.500" fill="#b8b8b8" stroke="#fff" />
                </svg>
                点
              </BigButton>
              <BigButton $active>
                <svg viewBox="0 0 30 30" fill="none">
                  <path d="M3 27L27 3" stroke="#555" />
                  <path d="M1 25.500h4v4H1zM25.500.5h4v4h-4z" fill="#fff" stroke={B} />
                </svg>
                直线
              </BigButton>
              <Column $pad={2}>
                <Tool icon="arc" label="圆弧" />
                <Tool icon="circle" label="圆" />
                <Tool icon="rect" label="矩形" />
              </Column>
            </GroupBody>
            <GroupLabel>绘图 <Arrow /></GroupLabel>
          </Group>
          <Group $width={142}>
            <GroupBody $pad={3}>
              <BigButton $width={56}>
                <svg viewBox="0 0 30 30" fill="none">
                  <path d="M9.500 1v26M17.500 1v26M25.500 1v20M3 8.500h26M3 14.500h26M3 20.500h26" stroke={B} />
                  <path d="M1.500 6.500h3v3h-3zM1.500 13h3v3h-3zM1.500 19.500h3v3h-3zM8.500 26h3v3h-3zM16 26h3v3h-3z" fill="#fff" stroke={B} />
                  <path d="M14 17l11 11" stroke="#c9803e" strokeWidth="4" />
                  <path d="M9 12l6 6M15 12l-6 6M12 11v8M8 15h8M20 15l2 2M21 19h3" stroke={O} strokeWidth="1.300" />
                </svg>
                智能布置
                <Arrow small />
              </BigButton>
              <Column>
                <Tool icon="checkElev" text="查改标高" />
              </Column>
            </GroupBody>
            <GroupLabel>砖胎膜二次编辑</GroupLabel>
          </Group>
        </Ribbon>

        <OptionsBar>
          <Picker label="工程" value="广州市新儿童活动中心" />
          <Picker label="楼层" value="基础层" />
          <Picker label="类别" value="基础" />
          <Picker label="类型" value="砖胎膜" />
          <Picker label="构件" value="ZTM-1" />
          <CheckField $strong><Tick /> 点加长度</CheckField>
          <Field>长度: <input defaultValue="0" /></Field>
          <Field>反向长度: <input defaultValue="0" /></Field>
          <Field $strong>左偏心距离: <input defaultValue="240" /></Field>
          <Picker label="偏移方式" value="不偏移" width={56} />
          <SpinField name="X" />
          <SpinField name="Y" />
        </OptionsBar>

        <Main>
          <SidePanel>
            <SideHead>
              <svg viewBox="0 0 13 13"><path d="M0 9h6M3 6v6M6 4h7M9.500 1v6" stroke={B} strokeWidth="2" /></svg>
              <ViewToggle aria-label="列表">
                <svg width="14" height="14" viewBox="0 0 14 14" fill="none" stroke={B}><path d="M1.500 1.500h1v1h-1zM1.500 6.500h1v1h-1zM1.500 11.500h1v1h-1zM6 2.500h7M6 7.500h7M6 12.500h7" /></svg>
              </ViewToggle>
              <ViewToggle aria-label="面板">
                <svg width="16" height="14" viewBox="0 0 16 14" fill="none" stroke={B}><path d="M.5.5h15v13H.5z" fill="#fff" /><path d="M0 0h16v5H0z" fill={B} stroke="none" /><path d="M3 2v1M5 2v1M7 2v1M11 2.500h3" stroke="#fff" /><path d="M3 7.500h7M3 10.500h5" /></svg>
              </ViewToggle>
            </SideHead>
            <SideBody>
              <Tree>
                {sideItems.map(([icon, text, child]) => (
                  <TreeRow key={text} $child={child}>
                    <TreeButton $child={child} $active={text === selected} onClick={() => setSelected(text)}>
                      <Icon name={icon} />
                      {text}
                    </TreeButton>
                    {text === "砖胎膜" && <RowFrame />}
                  </TreeRow>
                ))}
              </Tree>
              <ScrollThumb />
            </SideBody>
          </SidePanel>

          <Docks>
            <Dock $height={331}>
              <DockHeader />
              <DockTabs>
                <DockTab $active>构件列表</DockTab>
                <DockTab>图纸管理</DockTab>
              </DockTabs>
              <DockTools>
                <Tool icon="newDoc" text="新建" arrow />
                <Tool icon="del" text="删除" />
                <Tool icon="copyDoc" text="复制" />
                <Tool icon="layerCopy" text="层间复制" />
                <MoreButton aria-label="更多">
                  <svg width="8" height="6" viewBox="0 0 8 6"><path d="M0 0l4 3-4 3zM4 0l4 3-4 3z" fill="#444" /></svg>
                </MoreButton>
              </DockTools>
              <SearchRow>
                <input placeholder="搜索构件..." aria-label="搜索构件" />
                <svg width="11" height="11" viewBox="0 0 11 11" fill="none" stroke="#2a8ac4" strokeWidth="1.500"><circle cx="4.500" cy="4.500" r="3.700" /><path d="M7 7l3.500 3.500" strokeWidth="2" /></svg>
              </SearchRow>
              <PartTree>
                <PartRow>
                  <svg width="7" height="7" viewBox="0 0 7 7"><path d="M7 0v7H0z" fill="#333" /></svg>
                  砖胎膜
                </PartRow>
                <PartRow $leaf>ZTM-1</PartRow>
              </PartTree>
            </Dock>

            <Dock>
              <DockHeader />
              <DockTabs>
                <DockTab $active>属性列表</DockTab>
                <DockTab>图层管理</DockTab>
              </DockTabs>
              <GridArea>
                <PropTable>
                  <colgroup>
                    <col width="22" />
                    <col width="101" />
                    <col />
                    <col width="34" />
                  </colgroup>
                  <thead>
                    <tr><th /><th>属性名称</th><th>属性值</th><th>附加</th></tr>
                  </thead>
                  <tbody>
                    {properties.map(([n, name, value, o]) => (
                      <tr key={n}>
                        <td>{n}</td>
                        <NameCell $link={o.link}>
                          {o.group && (
                            <Expander aria-label="展开">
                              <svg width="8" height="8" viewBox="0 0 8 8"><path d="M0 4h8M4 0v8" stroke="#222" /></svg>
                            </Expander>
                          )}
                          {name}
                        </NameCell>
                        <ValueCell $empty={o.group}>{value}</ValueCell>
                        <td>{!o.noTick && <Tick aria-label={`附加 ${name}`} />}</td>
                      </tr>
                    ))}
                  </tbody>
                </PropTable>
              </GridArea>
              <HScroll>
                <svg viewBox="0 0 5 8"><path d="M5 0v8L0 4z" fill="#222" /></svg>
                <div />
                <svg viewBox="0 0 5 8"><path d="M0 0v8l5-4z" fill="#222" /></svg>
              </HScroll>
            </Dock>
          </Docks>

          <Splitter>
            <svg width="4" height="6" viewBox="0 0 4 6"><path d="M4 0v6L0 3z" fill="#b8c0c8" /></svg>
          </Splitter>

          <Plan />
        </Main>

        <StatusBar>
          <StatusText $width={204}>X = 15255 Y = 55055</StatusText>
          <StatusText $width={76}>层高：1.5</StatusText>
          <StatusText $width={130}>标高：-10.6~-9.1</StatusText>
          <StatusText $width={100}>0</StatusText>
          <StatusText $width={77}>隐藏：0</StatusText>
          <StatusButton $width={25} aria-label="正交">
            <svg viewBox="0 0 18 18" fill="none"><path d="M5.500 4v12M5.500 10.500h5V16" stroke="#333" /></svg>
          </StatusButton>
          <StatusButton $width={36} $active aria-label="捕捉">
            <svg viewBox="0 0 18 18" fill="none"><path d="M3.500 3.500h12V18h-12z" stroke={B} /><path d="M1 1h4v4H1z" fill="#f7a56b" stroke={O} /></svg>
            <Arrow small />
          </StatusButton>
          <StatusButton $width={25} aria-label="交点">
            <svg viewBox="0 0 18 18" fill="none"><path d="M2 2l14 14M16 2L2 16" stroke="#333" /><path d="M7 8h4v2H7z" fill="#333" /></svg>
          </StatusButton>
          <StatusButton $width={36} aria-label="中点">
            <svg viewBox="0 0 18 18" fill="none"><path d="M2 16L16 2" stroke="#333" /><circle cx="9" cy="9" r="2" fill="#333" /></svg>
            <Arrow small />
          </StatusButton>
          <StatusButton $width={36} aria-label="偏移点">
            <svg viewBox="0 0 18 18" fill="none"><path d="M1 5.500h8M5 1v9" stroke="#333" /><path d="M8 12h9v5H8z" fill="#333" /></svg>
            <Arrow small />
          </StatusButton>
          <StatusButton $width={73}>跨图层选择</StatusButton>
          <StatusButton $width={61}>折线选择</StatusButton>
          <StatusText>指定第一点</StatusText>
        </StatusBar>
        <HighlightFrame />
      </Page>
    </>
  );
}
